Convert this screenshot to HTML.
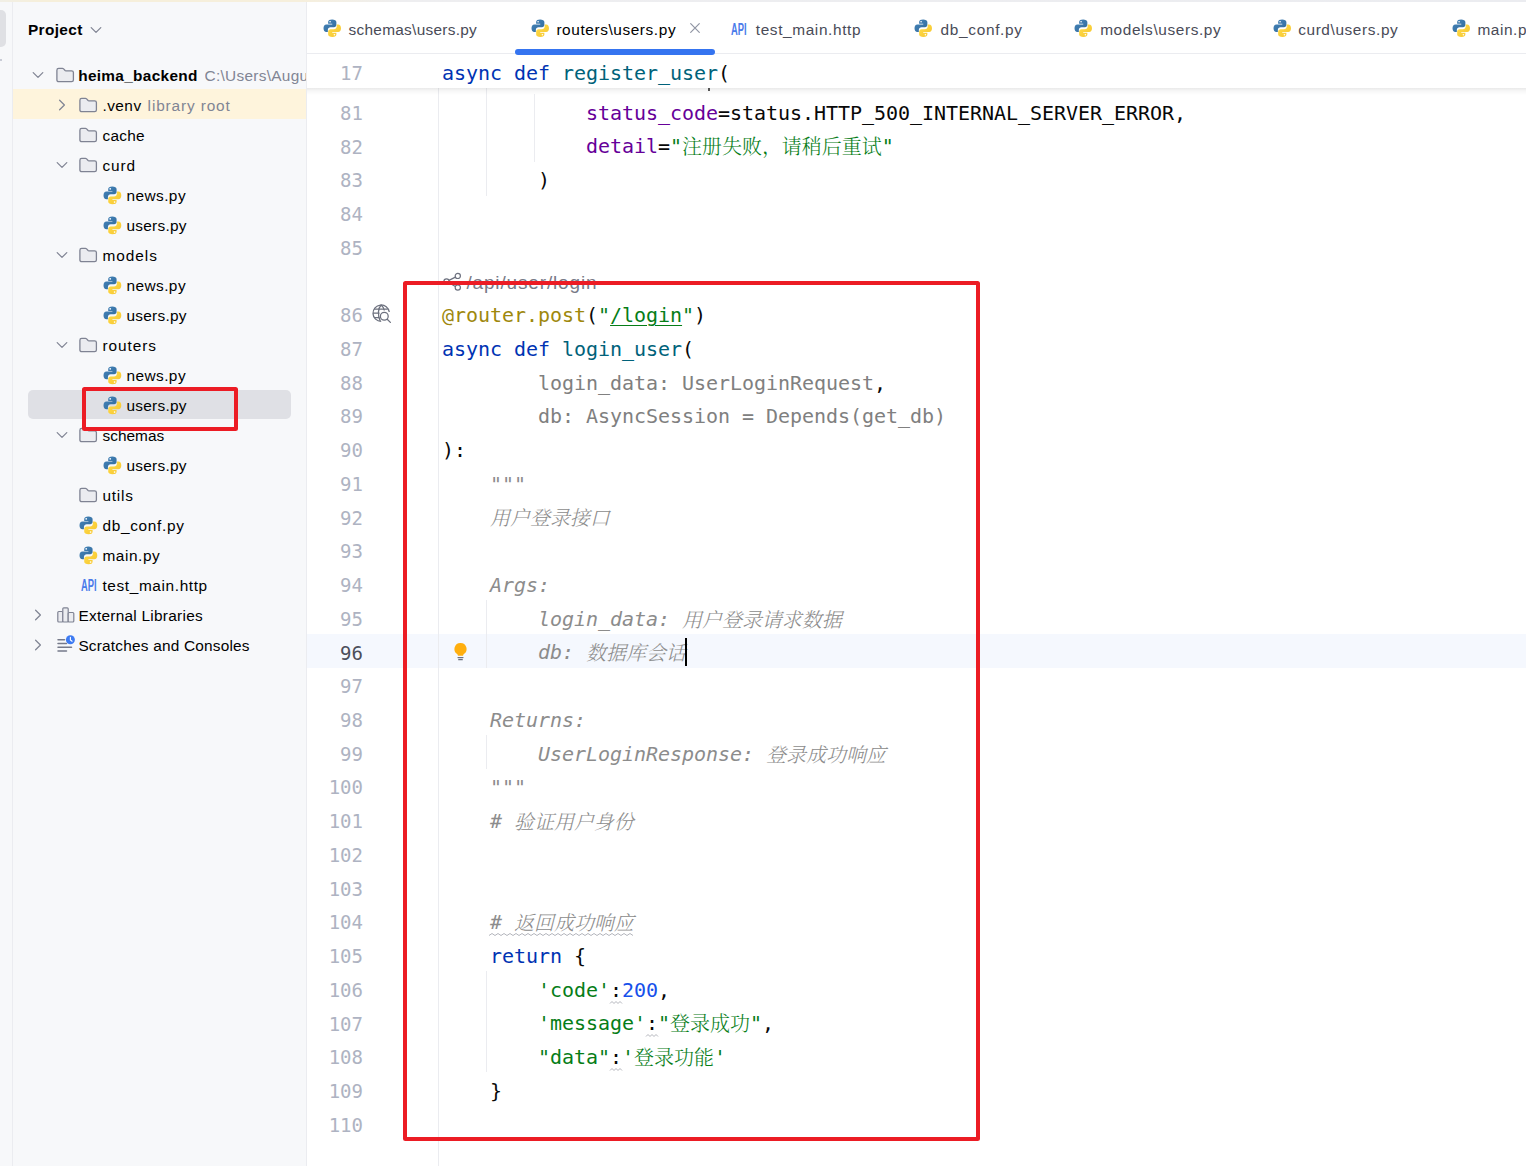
<!DOCTYPE html>
<html lang="zh"><head><meta charset="utf-8"><title>heima_backend – routers\users.py</title>
<style>
html,body{margin:0;padding:0}
body{width:1526px;height:1166px;overflow:hidden;position:relative;background:#fff;font-family:"Liberation Sans", "Noto Sans CJK SC", sans-serif;font-size:15.400px;color:#000}
.ic{position:absolute;display:block;overflow:visible}
.t{position:absolute;white-space:pre;line-height:24px;height:24px}
.b{font-weight:bold}
.g{color:#818594}
.tab{color:#494b57}
#side{position:absolute;left:0;top:0;width:306px;height:1166px;background:#f7f8fa}
#vl1{position:absolute;left:12px;top:2px;width:1px;height:1164px;background:#ebecf0}
#vl2{position:absolute;left:306px;top:2px;width:1px;height:1164px;background:#ebecf0}
#top{position:absolute;left:0;top:0;width:1526px;height:2px;background:linear-gradient(90deg,#f1efe6 0,#f6efda 40px,#f6efdc 300px,#eeeef0 400px,#ebecf0 100%);z-index:5}
#pill{position:absolute;left:-6px;top:10px;width:12px;height:37px;border-radius:5px;background:#dfe0e4}
#dash{position:absolute;left:0;top:59px;width:2px;height:2px;background:#c9ccd6}
#venv{position:absolute;left:13px;top:89px;width:293px;height:30px;background:#fef4dc}
#sel{position:absolute;left:28px;top:389.500px;width:263px;height:29.500px;border-radius:5px;background:#dfe0e5}
.red{position:absolute;box-sizing:border-box;border:4px solid #ec1c24;border-radius:2.500px;z-index:9}
#tabline{position:absolute;left:307px;top:53px;width:1219px;height:1px;background:#ebecf0}
#under{position:absolute;left:515px;top:49px;width:200px;height:5.700px;border-radius:3px;background:#3574f0;z-index:4}
#sticky{position:absolute;left:307px;top:54px;width:1219px;height:34px;background:#fff;z-index:3}
#shade{position:absolute;left:307px;top:88px;width:1219px;height:7px;z-index:3;background:linear-gradient(180deg,rgba(0,0,0,.085) 0,rgba(0,0,0,.035) 40%,rgba(0,0,0,0) 100%)}
#cur{position:absolute;left:307px;top:634px;width:1219px;height:34px;background:#f5f8fe}
.gl{position:absolute;width:1px;background:#ebecf0}
.ln{position:absolute;left:307px;width:56px;text-align:right;font-family:"DejaVu Sans Mono", "Liberation Mono", "Noto Serif CJK SC", monospace;font-size:19px;line-height:34px;height:34px;color:#aeb3c2;white-space:pre}
.cl{position:absolute;left:442px;font-family:"DejaVu Sans Mono", "Liberation Mono", "Noto Serif CJK SC", monospace;font-size:20px;line-height:34px;height:34px;white-space:pre;letter-spacing:-0.040px;color:#080808}
.k{color:#0033b3}.f{color:#00627a}.s{color:#067d17}.n{color:#1750eb}.d{color:#9e880d}.p{color:#660099}.u{color:#808080}
.c{color:#8c8c8c;font-style:italic}
.z{font-weight:300;position:relative;top:1px}
.ul{text-decoration:underline;text-decoration-thickness:1px;text-underline-offset:3px}
#caret{position:absolute;left:685px;top:638px;width:2px;height:28px;background:#000}
</style></head><body>
<svg width="0" height="0" style="position:absolute"><defs><linearGradient id="pyb" x1="0" y1="0" x2="1" y2="1"><stop offset="0" stop-color="#4585bb"/><stop offset="1" stop-color="#326a9a"/></linearGradient><linearGradient id="pyy" x1="0" y1="0" x2="1" y2="1"><stop offset="0" stop-color="#f6c52c"/><stop offset="1" stop-color="#ffdd4d"/></linearGradient></defs></svg>

<div id="side">
<div id="pill"></div><div id="dash"></div><div id="vl1"></div>
<div id="venv"></div><div id="sel"></div>
<span id="t_project" class="t b" style="left:28px;top:18.0px;letter-spacing:0.352px;">Project</span>
<svg class="ic" style="left:88.8px;top:22.7px" width="14" height="14" viewBox="0 0 14 14"><path d="M2.200 4.600L7 9.400l4.800-4.800" fill="none" stroke="#818594" stroke-width="1.250" stroke-linecap="round" stroke-linejoin="round"/></svg>
<svg class="ic" style="left:31.1px;top:68.3px" width="14" height="14" viewBox="0 0 14 14"><path d="M2.200 4.600L7 9.400l4.800-4.800" fill="none" stroke="#818594" stroke-width="1.250" stroke-linecap="round" stroke-linejoin="round"/></svg>
<svg class="ic" style="left:56px;top:67.3px" width="18" height="16" viewBox="0 0 18 16"><path d="M.9 3.200A1.800 1.800 0 0 1 2.700 1.400h3.700c.5 0 .9.200 1.200.5l1.500 1.600c.2.200.4.300.7.300h5.800a1.800 1.800 0 0 1 1.800 1.800v7.300a1.800 1.800 0 0 1-1.800 1.800H2.700a1.800 1.800 0 0 1-1.800-1.800z" fill="#ebecf0" stroke="#7f8393" stroke-width="1.300"/></svg>
<span id="t_root" class="t b" style="left:78.2px;top:64.3px;letter-spacing:0.310px;">heima_backend</span>
<span id="t_path" class="t g" style="left:204.6px;top:64.3px;letter-spacing:0.280px;width:101.4px;overflow:hidden;">C:\Users\August\PycharmProjects</span>
<svg class="ic" style="left:54.8px;top:98.0px" width="14" height="14" viewBox="0 0 14 14"><path d="M4.600 2.200L9.400 7l-4.800 4.800" fill="none" stroke="#818594" stroke-width="1.250" stroke-linecap="round" stroke-linejoin="round"/></svg>
<svg class="ic" style="left:79px;top:97.3px" width="18" height="16" viewBox="0 0 18 16"><path d="M.9 3.200A1.800 1.800 0 0 1 2.700 1.400h3.700c.5 0 .9.200 1.200.5l1.500 1.600c.2.200.4.300.7.300h5.800a1.800 1.800 0 0 1 1.800 1.800v7.300a1.800 1.800 0 0 1-1.800 1.800H2.700a1.800 1.800 0 0 1-1.800-1.800z" fill="#ebecf0" stroke="#7f8393" stroke-width="1.300"/></svg>
<span id="t_venv" class="t " style="left:102.4px;top:94.3px;letter-spacing:0.476px;">.venv</span>
<svg class="ic" style="left:79px;top:127.30000000000001px" width="18" height="16" viewBox="0 0 18 16"><path d="M.9 3.200A1.800 1.800 0 0 1 2.700 1.400h3.700c.5 0 .9.200 1.200.5l1.500 1.600c.2.200.4.300.7.300h5.800a1.800 1.800 0 0 1 1.800 1.800v7.300a1.800 1.800 0 0 1-1.800 1.800H2.700a1.800 1.800 0 0 1-1.800-1.800z" fill="#ebecf0" stroke="#7f8393" stroke-width="1.300"/></svg>
<span id="t_cache" class="t " style="left:102.4px;top:124.3px;letter-spacing:0.305px;">cache</span>
<svg class="ic" style="left:54.8px;top:158.3px" width="14" height="14" viewBox="0 0 14 14"><path d="M2.200 4.600L7 9.400l4.800-4.800" fill="none" stroke="#818594" stroke-width="1.250" stroke-linecap="round" stroke-linejoin="round"/></svg>
<svg class="ic" style="left:79px;top:157.3px" width="18" height="16" viewBox="0 0 18 16"><path d="M.9 3.200A1.800 1.800 0 0 1 2.700 1.400h3.700c.5 0 .9.200 1.200.5l1.500 1.600c.2.200.4.300.7.300h5.800a1.800 1.800 0 0 1 1.800 1.800v7.300a1.800 1.800 0 0 1-1.800 1.800H2.700a1.800 1.800 0 0 1-1.800-1.800z" fill="#ebecf0" stroke="#7f8393" stroke-width="1.300"/></svg>
<span id="t_curd" class="t " style="left:102.4px;top:154.3px;letter-spacing:0.949px;">curd</span>
<svg class="ic" style="left:102.6px;top:185.70000000000002px" width="18.8" height="18.8" viewBox="0 0 18 18"><path fill="url(#pyb)" d="M8.9.5C6.4.5 5 1.3 5 2.9v1.8h4v.6H3.3C1.5 5.3.5 6.8.5 9s1 3.7 2.8 3.7h1.400v-2.100c0-1.500 1.200-2.600 2.700-2.600h3.300c1.300 0 2.300-1 2.300-2.200V2.900C13 1.400 11.300.5 8.900.5z"/><circle cx="6.900" cy="2.700" r=".8" fill="#fff"/><g transform="rotate(180 9 9)"><path fill="url(#pyy)" d="M8.9.5C6.4.5 5 1.3 5 2.9v1.8h4v.6H3.3C1.5 5.3.5 6.8.5 9s1 3.7 2.8 3.7h1.400v-2.100c0-1.500 1.200-2.600 2.700-2.600h3.300c1.300 0 2.300-1 2.300-2.200V2.900C13 1.400 11.300.5 8.900.5z"/><circle cx="6.900" cy="2.700" r=".8" fill="#fff"/></g></svg>
<span id="t_n1" class="t " style="left:126.4px;top:184.3px;letter-spacing:0.455px;">news.py</span>
<svg class="ic" style="left:102.6px;top:215.70000000000002px" width="18.8" height="18.8" viewBox="0 0 18 18"><path fill="url(#pyb)" d="M8.9.5C6.4.5 5 1.3 5 2.9v1.8h4v.6H3.3C1.5 5.3.5 6.8.5 9s1 3.7 2.8 3.7h1.400v-2.100c0-1.500 1.200-2.600 2.700-2.600h3.300c1.300 0 2.300-1 2.300-2.200V2.900C13 1.400 11.300.5 8.900.5z"/><circle cx="6.900" cy="2.700" r=".8" fill="#fff"/><g transform="rotate(180 9 9)"><path fill="url(#pyy)" d="M8.9.5C6.4.5 5 1.3 5 2.9v1.8h4v.6H3.3C1.5 5.3.5 6.8.5 9s1 3.7 2.8 3.7h1.400v-2.100c0-1.500 1.200-2.600 2.700-2.600h3.300c1.300 0 2.300-1 2.300-2.200V2.900C13 1.400 11.300.5 8.900.5z"/><circle cx="6.900" cy="2.700" r=".8" fill="#fff"/></g></svg>
<span id="t_u1" class="t " style="left:126.4px;top:214.3px;letter-spacing:0.275px;">users.py</span>
<svg class="ic" style="left:54.8px;top:248.3px" width="14" height="14" viewBox="0 0 14 14"><path d="M2.200 4.600L7 9.400l4.800-4.800" fill="none" stroke="#818594" stroke-width="1.250" stroke-linecap="round" stroke-linejoin="round"/></svg>
<svg class="ic" style="left:79px;top:247.3px" width="18" height="16" viewBox="0 0 18 16"><path d="M.9 3.200A1.800 1.800 0 0 1 2.700 1.400h3.700c.5 0 .9.200 1.200.5l1.500 1.600c.2.200.4.300.7.300h5.800a1.800 1.800 0 0 1 1.800 1.800v7.300a1.800 1.800 0 0 1-1.800 1.800H2.700a1.800 1.800 0 0 1-1.800-1.800z" fill="#ebecf0" stroke="#7f8393" stroke-width="1.300"/></svg>
<span id="t_models" class="t " style="left:102.4px;top:244.3px;letter-spacing:0.975px;">models</span>
<svg class="ic" style="left:102.6px;top:275.7px" width="18.8" height="18.8" viewBox="0 0 18 18"><path fill="url(#pyb)" d="M8.9.5C6.4.5 5 1.3 5 2.9v1.8h4v.6H3.3C1.5 5.3.5 6.8.5 9s1 3.7 2.8 3.7h1.400v-2.100c0-1.500 1.200-2.600 2.700-2.600h3.300c1.300 0 2.300-1 2.300-2.200V2.900C13 1.400 11.300.5 8.900.5z"/><circle cx="6.900" cy="2.700" r=".8" fill="#fff"/><g transform="rotate(180 9 9)"><path fill="url(#pyy)" d="M8.9.5C6.4.5 5 1.3 5 2.9v1.8h4v.6H3.3C1.5 5.3.5 6.8.5 9s1 3.7 2.8 3.7h1.400v-2.100c0-1.500 1.200-2.600 2.700-2.600h3.300c1.300 0 2.300-1 2.300-2.200V2.900C13 1.400 11.300.5 8.900.5z"/><circle cx="6.900" cy="2.700" r=".8" fill="#fff"/></g></svg>
<span id="t_n2" class="t " style="left:126.4px;top:274.3px;letter-spacing:0.455px;">news.py</span>
<svg class="ic" style="left:102.6px;top:305.7px" width="18.8" height="18.8" viewBox="0 0 18 18"><path fill="url(#pyb)" d="M8.9.5C6.4.5 5 1.3 5 2.9v1.8h4v.6H3.3C1.5 5.3.5 6.8.5 9s1 3.7 2.8 3.7h1.400v-2.100c0-1.500 1.200-2.600 2.700-2.600h3.300c1.300 0 2.300-1 2.300-2.200V2.900C13 1.400 11.300.5 8.900.5z"/><circle cx="6.900" cy="2.700" r=".8" fill="#fff"/><g transform="rotate(180 9 9)"><path fill="url(#pyy)" d="M8.9.5C6.4.5 5 1.3 5 2.9v1.8h4v.6H3.3C1.5 5.3.5 6.8.5 9s1 3.7 2.8 3.7h1.400v-2.100c0-1.500 1.200-2.600 2.700-2.600h3.300c1.300 0 2.300-1 2.300-2.200V2.900C13 1.400 11.300.5 8.900.5z"/><circle cx="6.900" cy="2.700" r=".8" fill="#fff"/></g></svg>
<span id="t_u2" class="t " style="left:126.4px;top:304.3px;letter-spacing:0.275px;">users.py</span>
<svg class="ic" style="left:54.8px;top:338.3px" width="14" height="14" viewBox="0 0 14 14"><path d="M2.200 4.600L7 9.400l4.800-4.800" fill="none" stroke="#818594" stroke-width="1.250" stroke-linecap="round" stroke-linejoin="round"/></svg>
<svg class="ic" style="left:79px;top:337.3px" width="18" height="16" viewBox="0 0 18 16"><path d="M.9 3.200A1.800 1.800 0 0 1 2.700 1.400h3.700c.5 0 .9.200 1.200.5l1.500 1.600c.2.200.4.300.7.300h5.800a1.800 1.800 0 0 1 1.800 1.800v7.300a1.800 1.800 0 0 1-1.800 1.800H2.700a1.800 1.800 0 0 1-1.800-1.800z" fill="#ebecf0" stroke="#7f8393" stroke-width="1.300"/></svg>
<span id="t_routers" class="t " style="left:102.4px;top:334.3px;letter-spacing:0.932px;">routers</span>
<svg class="ic" style="left:102.6px;top:365.7px" width="18.8" height="18.8" viewBox="0 0 18 18"><path fill="url(#pyb)" d="M8.9.5C6.4.5 5 1.3 5 2.9v1.8h4v.6H3.3C1.5 5.3.5 6.8.5 9s1 3.7 2.8 3.7h1.400v-2.100c0-1.500 1.200-2.600 2.700-2.600h3.300c1.300 0 2.300-1 2.300-2.200V2.900C13 1.400 11.300.5 8.900.5z"/><circle cx="6.900" cy="2.700" r=".8" fill="#fff"/><g transform="rotate(180 9 9)"><path fill="url(#pyy)" d="M8.9.5C6.4.5 5 1.3 5 2.9v1.8h4v.6H3.3C1.5 5.3.5 6.8.5 9s1 3.7 2.8 3.7h1.400v-2.100c0-1.500 1.200-2.600 2.700-2.600h3.300c1.300 0 2.300-1 2.300-2.200V2.900C13 1.400 11.300.5 8.900.5z"/><circle cx="6.900" cy="2.700" r=".8" fill="#fff"/></g></svg>
<span id="t_n3" class="t " style="left:126.4px;top:364.3px;letter-spacing:0.455px;">news.py</span>
<svg class="ic" style="left:102.6px;top:395.7px" width="18.8" height="18.8" viewBox="0 0 18 18"><path fill="url(#pyb)" d="M8.9.5C6.4.5 5 1.3 5 2.9v1.8h4v.6H3.3C1.5 5.3.5 6.8.5 9s1 3.7 2.8 3.7h1.400v-2.100c0-1.500 1.200-2.600 2.700-2.600h3.300c1.300 0 2.300-1 2.300-2.200V2.900C13 1.400 11.300.5 8.900.5z"/><circle cx="6.900" cy="2.700" r=".8" fill="#fff"/><g transform="rotate(180 9 9)"><path fill="url(#pyy)" d="M8.9.5C6.4.5 5 1.3 5 2.9v1.8h4v.6H3.3C1.5 5.3.5 6.8.5 9s1 3.7 2.8 3.7h1.400v-2.100c0-1.500 1.200-2.600 2.700-2.600h3.300c1.300 0 2.300-1 2.300-2.200V2.900C13 1.400 11.300.5 8.900.5z"/><circle cx="6.900" cy="2.700" r=".8" fill="#fff"/></g></svg>
<span id="t_u3" class="t " style="left:126.4px;top:394.3px;letter-spacing:0.275px;">users.py</span>
<svg class="ic" style="left:54.8px;top:428.3px" width="14" height="14" viewBox="0 0 14 14"><path d="M2.200 4.600L7 9.400l4.800-4.800" fill="none" stroke="#818594" stroke-width="1.250" stroke-linecap="round" stroke-linejoin="round"/></svg>
<svg class="ic" style="left:79px;top:427.3px" width="18" height="16" viewBox="0 0 18 16"><path d="M.9 3.200A1.800 1.800 0 0 1 2.700 1.400h3.700c.5 0 .9.200 1.200.5l1.500 1.600c.2.200.4.300.7.300h5.800a1.800 1.800 0 0 1 1.800 1.800v7.300a1.800 1.800 0 0 1-1.800 1.800H2.700a1.800 1.800 0 0 1-1.800-1.800z" fill="#ebecf0" stroke="#7f8393" stroke-width="1.300"/></svg>
<span id="t_schemas" class="t " style="left:102.4px;top:424.3px;letter-spacing:0.051px;">schemas</span>
<svg class="ic" style="left:102.6px;top:455.7px" width="18.8" height="18.8" viewBox="0 0 18 18"><path fill="url(#pyb)" d="M8.9.5C6.4.5 5 1.3 5 2.9v1.8h4v.6H3.3C1.5 5.3.5 6.8.5 9s1 3.7 2.8 3.7h1.400v-2.100c0-1.500 1.200-2.600 2.700-2.600h3.300c1.300 0 2.300-1 2.300-2.200V2.900C13 1.400 11.300.5 8.900.5z"/><circle cx="6.900" cy="2.700" r=".8" fill="#fff"/><g transform="rotate(180 9 9)"><path fill="url(#pyy)" d="M8.9.5C6.4.5 5 1.3 5 2.9v1.8h4v.6H3.3C1.5 5.3.5 6.8.5 9s1 3.7 2.8 3.7h1.400v-2.100c0-1.500 1.200-2.600 2.700-2.600h3.300c1.300 0 2.300-1 2.300-2.200V2.900C13 1.400 11.300.5 8.900.5z"/><circle cx="6.900" cy="2.700" r=".8" fill="#fff"/></g></svg>
<span id="t_u4" class="t " style="left:126.4px;top:454.3px;letter-spacing:0.275px;">users.py</span>
<svg class="ic" style="left:79px;top:487.3px" width="18" height="16" viewBox="0 0 18 16"><path d="M.9 3.200A1.800 1.800 0 0 1 2.700 1.400h3.700c.5 0 .9.200 1.200.5l1.500 1.600c.2.200.4.300.7.300h5.800a1.800 1.800 0 0 1 1.800 1.800v7.300a1.800 1.800 0 0 1-1.800 1.800H2.700a1.800 1.800 0 0 1-1.800-1.800z" fill="#ebecf0" stroke="#7f8393" stroke-width="1.300"/></svg>
<span id="t_utils" class="t " style="left:102.4px;top:484.3px;letter-spacing:0.781px;">utils</span>
<svg class="ic" style="left:78.8px;top:515.6999999999999px" width="18.8" height="18.8" viewBox="0 0 18 18"><path fill="url(#pyb)" d="M8.9.5C6.4.5 5 1.3 5 2.9v1.8h4v.6H3.3C1.5 5.3.5 6.8.5 9s1 3.7 2.8 3.7h1.400v-2.100c0-1.500 1.200-2.600 2.700-2.600h3.300c1.300 0 2.300-1 2.300-2.200V2.900C13 1.400 11.300.5 8.900.5z"/><circle cx="6.900" cy="2.700" r=".8" fill="#fff"/><g transform="rotate(180 9 9)"><path fill="url(#pyy)" d="M8.9.5C6.4.5 5 1.3 5 2.9v1.8h4v.6H3.3C1.5 5.3.5 6.8.5 9s1 3.7 2.8 3.7h1.400v-2.100c0-1.500 1.200-2.600 2.700-2.600h3.300c1.300 0 2.300-1 2.300-2.200V2.900C13 1.400 11.300.5 8.900.5z"/><circle cx="6.900" cy="2.700" r=".8" fill="#fff"/></g></svg>
<span id="t_dbconf" class="t " style="left:102.4px;top:514.3px;letter-spacing:0.699px;">db_conf.py</span>
<svg class="ic" style="left:78.8px;top:545.6999999999999px" width="18.8" height="18.8" viewBox="0 0 18 18"><path fill="url(#pyb)" d="M8.9.5C6.4.5 5 1.3 5 2.9v1.8h4v.6H3.3C1.5 5.3.5 6.8.5 9s1 3.7 2.8 3.7h1.400v-2.100c0-1.500 1.200-2.600 2.700-2.600h3.300c1.300 0 2.300-1 2.300-2.200V2.900C13 1.400 11.300.5 8.900.5z"/><circle cx="6.900" cy="2.700" r=".8" fill="#fff"/><g transform="rotate(180 9 9)"><path fill="url(#pyy)" d="M8.9.5C6.4.5 5 1.3 5 2.9v1.8h4v.6H3.3C1.5 5.3.5 6.8.5 9s1 3.7 2.8 3.7h1.400v-2.100c0-1.500 1.200-2.600 2.700-2.600h3.300c1.300 0 2.300-1 2.300-2.200V2.900C13 1.400 11.300.5 8.900.5z"/><circle cx="6.900" cy="2.700" r=".8" fill="#fff"/></g></svg>
<span id="t_main" class="t " style="left:102.4px;top:544.3px;letter-spacing:0.585px;">main.py</span>
<svg class="ic" style="left:80.6px;top:578.8px" width="17" height="14" viewBox="0 0 17 14"><text x="0" y="12.300" font-family="Liberation Sans, sans-serif" font-weight="bold" font-size="15.800" fill="#4a7bea" textLength="15.600" lengthAdjust="spacingAndGlyphs">API</text></svg>
<span id="t_http" class="t " style="left:102.4px;top:574.3px;letter-spacing:0.624px;">test_main.http</span>
<span id="t_libroot" class="t g" style="left:147.6px;top:94.3px;letter-spacing:0.863px;">library root</span>
<svg class="ic" style="left:31.1px;top:608.3px" width="14" height="14" viewBox="0 0 14 14"><path d="M4.600 2.200L9.400 7l-4.800 4.800" fill="none" stroke="#818594" stroke-width="1.250" stroke-linecap="round" stroke-linejoin="round"/></svg>
<svg class="ic" style="left:57px;top:607.3px" width="18" height="16" viewBox="0 0 18 16"><g fill="#ebecf0" stroke="#7f8393" stroke-width="1.200" stroke-linejoin="round"><rect x=".8" y="4.500" width="5" height="10.500" rx="1"/><rect x="5.800" y=".8" width="5.400" height="14.200" rx="1"/><rect x="11.200" y="5.500" width="5.600" height="9.500" rx="1"/></g></svg>
<span id="t_ext" class="t " style="left:78.4px;top:604.3px;letter-spacing:0.267px;">External Libraries</span>
<svg class="ic" style="left:31.1px;top:638.3px" width="14" height="14" viewBox="0 0 14 14"><path d="M4.600 2.200L9.400 7l-4.800 4.800" fill="none" stroke="#818594" stroke-width="1.250" stroke-linecap="round" stroke-linejoin="round"/></svg>
<svg class="ic" style="left:57.4px;top:634.8px" width="18" height="17" viewBox="0 0 18 17"><g stroke="#767a8a" stroke-width="1.500" stroke-linecap="round"><path d="M1 4.700h6.500M1 8.500h8.500M1 12.300h13.500M1 16h8.500"/></g><circle cx="13.400" cy="4.700" r="4.500" fill="#3e7bf2"/><path d="M13.400 2.300v2.600l1.700 1.300" fill="none" stroke="#fff" stroke-width="1.100" stroke-linecap="round"/></svg>
<span id="t_scr" class="t " style="left:78.4px;top:634.3px;letter-spacing:0.203px;">Scratches and Consoles</span>
</div>
<div id="vl2"></div>
<svg class="ic" style="left:322.7px;top:18.8px" width="18.5" height="18.5" viewBox="0 0 18 18"><path fill="url(#pyb)" d="M8.9.5C6.4.5 5 1.3 5 2.9v1.8h4v.6H3.3C1.5 5.3.5 6.8.5 9s1 3.7 2.8 3.7h1.400v-2.100c0-1.500 1.200-2.600 2.700-2.600h3.300c1.300 0 2.300-1 2.300-2.200V2.900C13 1.400 11.300.5 8.900.5z"/><circle cx="6.900" cy="2.700" r=".8" fill="#fff"/><g transform="rotate(180 9 9)"><path fill="url(#pyy)" d="M8.9.5C6.4.5 5 1.3 5 2.9v1.8h4v.6H3.3C1.5 5.3.5 6.8.5 9s1 3.7 2.8 3.7h1.400v-2.100c0-1.500 1.200-2.600 2.700-2.600h3.300c1.300 0 2.300-1 2.300-2.200V2.900C13 1.400 11.300.5 8.900.5z"/><circle cx="6.900" cy="2.700" r=".8" fill="#fff"/></g></svg>
<span id="tb1" class="t tab" style="left:348.5px;top:18.0px;letter-spacing:0.285px;">schemas\users.py</span>
<svg class="ic" style="left:531px;top:18.8px" width="18.5" height="18.5" viewBox="0 0 18 18"><path fill="url(#pyb)" d="M8.9.5C6.4.5 5 1.3 5 2.9v1.8h4v.6H3.3C1.5 5.3.5 6.8.5 9s1 3.7 2.8 3.7h1.400v-2.100c0-1.500 1.200-2.600 2.700-2.600h3.300c1.300 0 2.300-1 2.300-2.200V2.900C13 1.400 11.300.5 8.900.5z"/><circle cx="6.900" cy="2.700" r=".8" fill="#fff"/><g transform="rotate(180 9 9)"><path fill="url(#pyy)" d="M8.9.5C6.4.5 5 1.3 5 2.9v1.8h4v.6H3.3C1.5 5.3.5 6.8.5 9s1 3.7 2.8 3.7h1.400v-2.100c0-1.500 1.200-2.600 2.700-2.600h3.300c1.300 0 2.300-1 2.300-2.200V2.900C13 1.400 11.300.5 8.900.5z"/><circle cx="6.900" cy="2.700" r=".8" fill="#fff"/></g></svg>
<span id="tb2" class="t " style="left:556.4px;top:18.0px;letter-spacing:0.590px;">routers\users.py</span>
<svg class="ic" style="left:730.8px;top:22.5px" width="17" height="14" viewBox="0 0 17 14"><text x="0" y="12.300" font-family="Liberation Sans, sans-serif" font-weight="bold" font-size="15.800" fill="#4a7bea" textLength="15.600" lengthAdjust="spacingAndGlyphs">API</text></svg>
<span id="tb3" class="t tab" style="left:755.8px;top:18.0px;letter-spacing:0.616px;">test_main.http</span>
<svg class="ic" style="left:914.3px;top:18.8px" width="18.5" height="18.5" viewBox="0 0 18 18"><path fill="url(#pyb)" d="M8.9.5C6.4.5 5 1.3 5 2.9v1.8h4v.6H3.3C1.5 5.3.5 6.8.5 9s1 3.7 2.8 3.7h1.400v-2.100c0-1.500 1.200-2.600 2.700-2.600h3.300c1.300 0 2.300-1 2.300-2.200V2.900C13 1.400 11.300.5 8.900.5z"/><circle cx="6.900" cy="2.700" r=".8" fill="#fff"/><g transform="rotate(180 9 9)"><path fill="url(#pyy)" d="M8.9.5C6.4.5 5 1.3 5 2.9v1.8h4v.6H3.3C1.5 5.3.5 6.8.5 9s1 3.7 2.8 3.7h1.400v-2.100c0-1.500 1.200-2.600 2.700-2.600h3.300c1.300 0 2.300-1 2.300-2.200V2.900C13 1.400 11.300.5 8.900.5z"/><circle cx="6.900" cy="2.700" r=".8" fill="#fff"/></g></svg>
<span id="tb4" class="t tab" style="left:940.6px;top:18.0px;letter-spacing:0.676px;">db_conf.py</span>
<svg class="ic" style="left:1074.1px;top:18.8px" width="18.5" height="18.5" viewBox="0 0 18 18"><path fill="url(#pyb)" d="M8.9.5C6.4.5 5 1.3 5 2.9v1.8h4v.6H3.3C1.5 5.3.5 6.8.5 9s1 3.7 2.8 3.7h1.400v-2.100c0-1.500 1.200-2.600 2.700-2.600h3.300c1.300 0 2.300-1 2.300-2.200V2.900C13 1.400 11.300.5 8.900.5z"/><circle cx="6.900" cy="2.700" r=".8" fill="#fff"/><g transform="rotate(180 9 9)"><path fill="url(#pyy)" d="M8.9.5C6.4.5 5 1.3 5 2.9v1.8h4v.6H3.3C1.5 5.3.5 6.8.5 9s1 3.7 2.8 3.7h1.400v-2.100c0-1.500 1.200-2.600 2.700-2.600h3.300c1.300 0 2.300-1 2.300-2.200V2.900C13 1.400 11.300.5 8.900.5z"/><circle cx="6.900" cy="2.700" r=".8" fill="#fff"/></g></svg>
<span id="tb5" class="t tab" style="left:1100.2px;top:18.0px;letter-spacing:0.603px;">models\users.py</span>
<svg class="ic" style="left:1273.2px;top:18.8px" width="18.5" height="18.5" viewBox="0 0 18 18"><path fill="url(#pyb)" d="M8.9.5C6.4.5 5 1.3 5 2.9v1.8h4v.6H3.3C1.5 5.3.5 6.8.5 9s1 3.7 2.8 3.7h1.400v-2.100c0-1.500 1.200-2.600 2.700-2.600h3.300c1.300 0 2.300-1 2.300-2.200V2.900C13 1.400 11.300.5 8.900.5z"/><circle cx="6.900" cy="2.700" r=".8" fill="#fff"/><g transform="rotate(180 9 9)"><path fill="url(#pyy)" d="M8.9.5C6.4.5 5 1.3 5 2.9v1.8h4v.6H3.3C1.5 5.3.5 6.8.5 9s1 3.7 2.8 3.7h1.400v-2.100c0-1.500 1.200-2.600 2.700-2.600h3.300c1.300 0 2.300-1 2.300-2.200V2.900C13 1.400 11.300.5 8.900.5z"/><circle cx="6.900" cy="2.700" r=".8" fill="#fff"/></g></svg>
<span id="tb6" class="t tab" style="left:1298.2px;top:18.0px;letter-spacing:0.601px;">curd\users.py</span>
<svg class="ic" style="left:1451.8px;top:18.8px" width="18.5" height="18.5" viewBox="0 0 18 18"><path fill="url(#pyb)" d="M8.9.5C6.4.5 5 1.3 5 2.9v1.8h4v.6H3.3C1.5 5.3.5 6.8.5 9s1 3.7 2.8 3.7h1.400v-2.100c0-1.500 1.200-2.600 2.700-2.600h3.300c1.300 0 2.300-1 2.300-2.200V2.900C13 1.400 11.300.5 8.900.5z"/><circle cx="6.900" cy="2.700" r=".8" fill="#fff"/><g transform="rotate(180 9 9)"><path fill="url(#pyy)" d="M8.9.5C6.4.5 5 1.3 5 2.9v1.8h4v.6H3.3C1.5 5.3.5 6.8.5 9s1 3.7 2.8 3.7h1.400v-2.100c0-1.500 1.200-2.600 2.700-2.600h3.300c1.300 0 2.300-1 2.300-2.200V2.900C13 1.400 11.300.5 8.900.5z"/><circle cx="6.900" cy="2.700" r=".8" fill="#fff"/></g></svg>
<span id="tb7" class="t tab" style="left:1477.4px;top:18.0px;letter-spacing:0.585px;">main.py</span>
<svg class="ic" style="left:688px;top:21px" width="14" height="14" viewBox="0 0 14 14"><path d="M2.700 2.700l8.600 8.600M11.300 2.700l-8.600 8.600" stroke="#9095a3" stroke-width="1.200" stroke-linecap="round"/></svg>
<div id="tabline"></div><div id="under"></div>
<div id="cur"></div>
<div class="gl" style="left:438px;top:88px;height:1078px"></div>
<div class="gl" style="left:486px;top:88px;height:107.5px"></div>
<div class="gl" style="left:534px;top:94.3px;height:67.5px"></div>
<div class="gl" style="left:486px;top:600.3px;height:67.5px"></div>
<div class="gl" style="left:486px;top:735.2px;height:33.7px"></div>
<div class="gl" style="left:486px;top:971.3px;height:101.2px"></div>
<div class="ln" style="top:95.87px">81</div>
<div class="cl" id="L81" style="top:95.72px">            <span class="p">status_code</span>=status.HTTP_500_INTERNAL_SERVER_ERROR,</div>
<div class="ln" style="top:129.60px">82</div>
<div class="cl" id="L82" style="top:129.45px">            <span class="p">detail</span>=<span class="s">&quot;<span class="z">注册失败，请稍后重试</span>&quot;</span></div>
<div class="ln" style="top:163.33px">83</div>
<div class="cl" id="L83" style="top:163.18px">        )</div>
<div class="ln" style="top:197.06px">84</div>
<div class="ln" style="top:230.79px">85</div>
<div class="ln" style="top:298.25px">86</div>
<div class="cl" id="L86" style="top:298.10px"><span class="d">@router.post</span>(<span class="s">&quot;<span class="ul">/login</span>&quot;</span>)</div>
<div class="ln" style="top:331.98px">87</div>
<div class="cl" id="L87" style="top:331.83px"><span class="k">async def </span><span class="f">login_user</span>(</div>
<div class="ln" style="top:365.71px">88</div>
<div class="cl" id="L88" style="top:365.56px">        <span class="u">login_data: UserLoginRequest</span>,</div>
<div class="ln" style="top:399.44px">89</div>
<div class="cl" id="L89" style="top:399.29px">        <span class="u">db: AsyncSession = Depends(get_db)</span></div>
<div class="ln" style="top:433.17px">90</div>
<div class="cl" id="L90" style="top:433.02px">):</div>
<div class="ln" style="top:466.90px">91</div>
<div class="cl" id="L91" style="top:466.75px">    <span class="c">&quot;&quot;&quot;</span></div>
<div class="ln" style="top:500.63px">92</div>
<div class="cl" id="L92" style="top:500.48px">    <span class="c"><span class="z">用户登录接口</span></span></div>
<div class="ln" style="top:534.36px">93</div>
<div class="ln" style="top:568.09px">94</div>
<div class="cl" id="L94" style="top:567.94px">    <span class="c">Args:</span></div>
<div class="ln" style="top:601.82px">95</div>
<div class="cl" id="L95" style="top:601.67px">        <span class="c">login_data: <span class="z">用户登录请求数据</span></span></div>
<div class="ln" style="top:635.55px;color:#4b4e5a">96</div>
<div class="cl" id="L96" style="top:635.40px">        <span class="c">db: <span class="z">数据库会话</span></span></div>
<div class="ln" style="top:669.28px">97</div>
<div class="ln" style="top:703.01px">98</div>
<div class="cl" id="L98" style="top:702.86px">    <span class="c">Returns:</span></div>
<div class="ln" style="top:736.74px">99</div>
<div class="cl" id="L99" style="top:736.59px">        <span class="c">UserLoginResponse: <span class="z">登录成功响应</span></span></div>
<div class="ln" style="top:770.47px">100</div>
<div class="cl" id="L100" style="top:770.32px">    <span class="c">&quot;&quot;&quot;</span></div>
<div class="ln" style="top:804.20px">101</div>
<div class="cl" id="L101" style="top:804.05px">    <span class="c"># <span class="z">验证用户身份</span></span></div>
<div class="ln" style="top:837.93px">102</div>
<div class="ln" style="top:871.66px">103</div>
<div class="ln" style="top:905.39px">104</div>
<div class="cl" id="L104" style="top:905.24px">    <span class="c"># <span class="z">返回成功响应</span></span></div>
<div class="ln" style="top:939.12px">105</div>
<div class="cl" id="L105" style="top:938.97px">    <span class="k">return</span> {</div>
<div class="ln" style="top:972.85px">106</div>
<div class="cl" id="L106" style="top:972.70px">        <span class="s">&#x27;code&#x27;</span>:<span class="n">200</span>,</div>
<div class="ln" style="top:1006.58px">107</div>
<div class="cl" id="L107" style="top:1006.43px">        <span class="s">&#x27;message&#x27;</span>:<span class="s">&quot;<span class="z">登录成功</span>&quot;</span>,</div>
<div class="ln" style="top:1040.31px">108</div>
<div class="cl" id="L108" style="top:1040.16px">        <span class="s">&quot;data&quot;</span>:<span class="s">&#x27;<span class="z">登录功能</span>&#x27;</span></div>
<div class="ln" style="top:1074.04px">109</div>
<div class="cl" id="L109" style="top:1073.89px">    }</div>
<div class="ln" style="top:1107.77px">110</div>
<div id="caret"></div>
<svg class="ic" style="left:442px;top:272px" width="20" height="20" viewBox="0 0 20 20"><g fill="none" stroke="#6c707e" stroke-width="1.200"><circle cx="4.500" cy="9.500" r="2.600"/><circle cx="15.800" cy="3.900" r="2.600"/><circle cx="15.800" cy="15.600" r="2.600"/><path d="M6.900 8.400l6.500-3.300M6.900 10.700l6.500 3.700"/></g></svg>
<span id="t_hint" class="t " style="left:466.4px;top:271.0px;letter-spacing:0.850px;color:#777a87;font-size:19px;">/api/user/login</span>
<svg class="ic" style="left:371.500px;top:303.500px" width="20" height="20" viewBox="0 0 20 20"><g fill="none" stroke="#6c707e" stroke-width="1.250"><path d="M9.200 17.400A8.200 8.200 0 1 1 17.300 8"/><path d="M1 9.200h6.500M2.300 5h13.400M2.300 13.500h4.900"/><path d="M9.200 1c-3.200 3-3.800 10-1 16M9.200 1c1.600 1.400 2.700 3.300 3.100 5.500"/><circle cx="12.300" cy="12.300" r="3.900"/><path d="M15.200 15.200l3.200 3.200" stroke-linecap="round"/></g></svg>
<svg class="ic" style="left:453px;top:641.500px" width="15" height="20" viewBox="0 0 15 20"><path d="M7.500 1a6 6 0 0 0-3.400 11c.5.400.8.900.8 1.500v.3h5.200v-.3c0-.6.300-1.100.8-1.500A6 6 0 0 0 7.500 1z" fill="#ffaf0f"/><path d="M5 15.600h5M5.700 17.700h3.600" stroke="#6c707e" stroke-width="1.200" stroke-linecap="round"/></svg>
<svg class="ic" style="left:489px;top:933.04px" width="144" height="4" viewBox="0 0 144 4"><path d="M0 2.5l3-2l3 2l3-2l3 2l3-2l3 2l3-2l3 2l3-2l3 2l3-2l3 2l3-2l3 2l3-2l3 2l3-2l3 2l3-2l3 2l3-2l3 2l3-2l3 2l3-2l3 2l3-2l3 2l3-2l3 2l3-2l3 2l3-2l3 2l3-2l3 2l3-2l3 2l3-2l3 2l3-2l3 2l3-2l3 2l3-2l3 2l3-2l3 2" fill="none" stroke="#b4b6bd" stroke-width="1"/></svg>
<svg class="ic" style="left:609.5px;top:1000.5999999999999px" width="12" height="4" viewBox="0 0 12 4"><path d="M0 2.5l2-2l2 2l2-2l2 2l2-2l2 2" fill="none" stroke="#b4b6bd" stroke-width="1"/></svg>
<svg class="ic" style="left:645.5px;top:1034.33px" width="12" height="4" viewBox="0 0 12 4"><path d="M0 2.5l2-2l2 2l2-2l2 2l2-2l2 2" fill="none" stroke="#b4b6bd" stroke-width="1"/></svg>
<svg class="ic" style="left:609.5px;top:1068.06px" width="12" height="4" viewBox="0 0 12 4"><path d="M0 2.5l2-2l2 2l2-2l2 2l2-2l2 2" fill="none" stroke="#b4b6bd" stroke-width="1"/></svg>
<div id="shade"></div>
<div style="position:absolute;left:708px;top:88px;width:1.500px;height:2.500px;background:#555;z-index:4"></div>
<div id="sticky">
<div class="ln" style="left:0;top:1.500px">17</div>
<div class="cl" id="L17" style="left:135px;top:1.500px"><span class="k">async def </span><span class="f">register_user</span>(</div>
</div>
<div class="red" style="left:403px;top:281px;width:577px;height:860px"></div>
<div class="red" style="left:82px;top:387px;width:156px;height:44px"></div>
<div id="top"></div>
</body></html>
